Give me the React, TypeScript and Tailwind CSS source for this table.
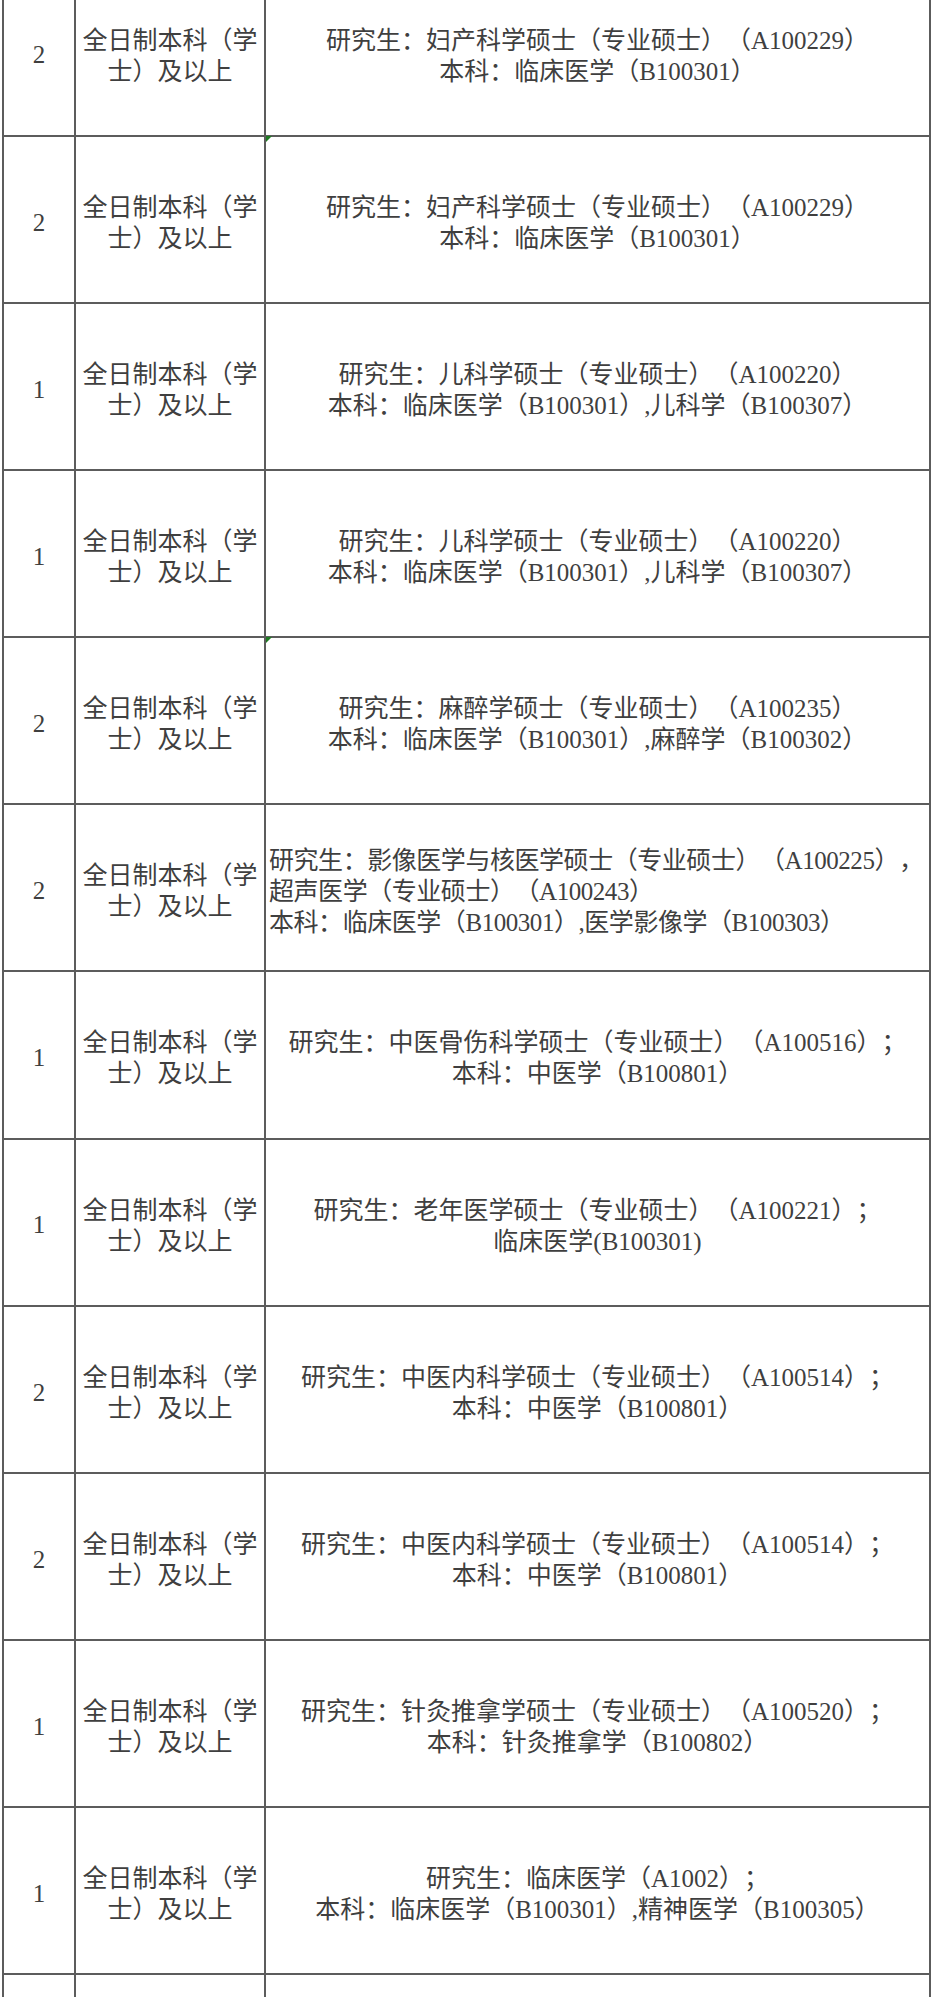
import React from "react";

interface Row {
  count: string;
  lines: string[];
  left?: boolean;
  flag?: boolean;
}

const rows: Row[] = [
  { count: "2", lines: ["研究生：妇产科学硕士（专业硕士）（A100229）", "本科：临床医学（B100301）"] },
  { count: "2", lines: ["研究生：妇产科学硕士（专业硕士）（A100229）", "本科：临床医学（B100301）"], flag: true },
  { count: "1", lines: ["研究生：儿科学硕士（专业硕士）（A100220）", "本科：临床医学（B100301）,儿科学（B100307）"] },
  { count: "1", lines: ["研究生：儿科学硕士（专业硕士）（A100220）", "本科：临床医学（B100301）,儿科学（B100307）"] },
  { count: "2", lines: ["研究生：麻醉学硕士（专业硕士）（A100235）", "本科：临床医学（B100301）,麻醉学（B100302）"], flag: true },
  {
    count: "2",
    lines: [
      "研究生：影像医学与核医学硕士（专业硕士）（A100225），",
      "超声医学（专业硕士）（A100243）",
      "本科：临床医学（B100301）,医学影像学（B100303）",
    ],
    left: true,
  },
  { count: "1", lines: ["研究生：中医骨伤科学硕士（专业硕士）（A100516）；", "本科：中医学（B100801）"] },
  { count: "1", lines: ["研究生：老年医学硕士（专业硕士）（A100221）；", "临床医学(B100301)"] },
  { count: "2", lines: ["研究生：中医内科学硕士（专业硕士）（A100514）；", "本科：中医学（B100801）"] },
  { count: "2", lines: ["研究生：中医内科学硕士（专业硕士）（A100514）；", "本科：中医学（B100801）"] },
  { count: "1", lines: ["研究生：针灸推拿学硕士（专业硕士）（A100520）；", "本科：针灸推拿学（B100802）"] },
  { count: "1", lines: ["研究生：临床医学（A1002）；", "本科：临床医学（B100301）,精神医学（B100305）"] },
  { count: "", lines: [] },
];

function TableRow({ row }: { row: Row }) {
  const empty = row.lines.length === 0;
  return (
    <div className="flex h-[167.15px] border-b-2 border-[#5c5c5c]">
      {/* count */}
      <div className="flex w-[72px] shrink-0 items-center justify-center border-r-2 border-[#5c5c5c] pt-[6px] text-[25px]">
        {row.count}
      </div>
      {/* degree */}
      <div className="flex w-[190px] shrink-0 flex-col items-center justify-center border-r-2 border-[#5c5c5c] pt-[7px] leading-[31px]">
        {!empty && (
          <>
            <span className="whitespace-nowrap">全日制本科（学</span>
            <span className="whitespace-nowrap">士）及以上</span>
          </>
        )}
      </div>
      {/* major */}
      <div
        className={
          row.left
            ? "relative flex min-w-0 flex-1 flex-col items-start justify-center pl-[3px] pt-[7px] leading-[31px] tracking-[-0.45px]"
            : "relative flex min-w-0 flex-1 flex-col items-center justify-center pt-[7px] leading-[31px]"
        }
      >
        {row.flag && (
          <span className="absolute left-0 top-[-1px] h-0 w-0 border-r-[6px] border-t-[6px] border-r-transparent border-t-[#1f7a22]"></span>
        )}
        {row.lines.map((line, i) => (
          <span key={i} className="whitespace-nowrap">
            {line}
          </span>
        ))}
      </div>
    </div>
  );
}

export default function App() {
  return (
    <div className="h-[1997px] w-[936px] overflow-hidden bg-white font-[family-name:'Liberation_Serif','Noto_Sans_CJK_SC',serif] text-[25px] text-[#3f3f3f] [text-spacing-trim:space-all]">
      <div className="-mt-[30.45px] ml-[2px] w-[929px] border-x-2 border-[#5c5c5c]">
        {rows.map((row, i) => (
          <TableRow key={i} row={row} />
        ))}
      </div>
    </div>
  );
}
